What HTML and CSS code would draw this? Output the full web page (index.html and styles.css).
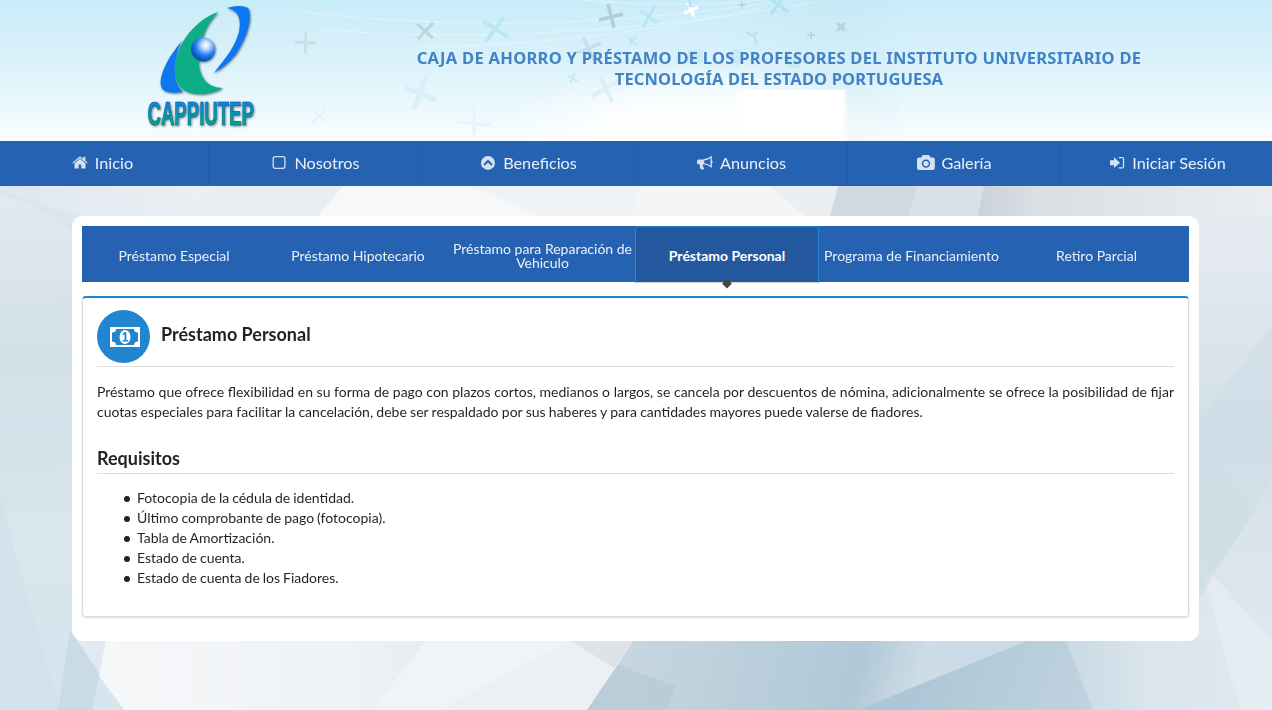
FILE: index.html
```html
<!DOCTYPE html>
<html lang="es">
<head>
<meta charset="utf-8">
<title>CAPPIUTEP - Préstamo Personal</title>
<link rel="stylesheet" href="styles.css">
</head>
<body>
<svg class="backdrop" viewBox="0 0 1272 710" preserveAspectRatio="none" aria-hidden="true">
  <defs>
    <linearGradient id="topL" x1="0" x2="1"><stop offset="0" stop-color="#dfe7ef"/><stop offset="1" stop-color="#ebf0f3"/></linearGradient>
    <linearGradient id="topR" x1="0" x2="1"><stop offset="0" stop-color="#cad1d8"/><stop offset=".2" stop-color="#d9dfe3"/><stop offset="1" stop-color="#eaeef2"/></linearGradient>
    <linearGradient id="left" x1="0" y1="0" x2="0" y2="1"><stop offset=".26" stop-color="#e3e9f1"/><stop offset=".5" stop-color="#d3e1e9"/><stop offset=".75" stop-color="#d9e6ee"/><stop offset="1" stop-color="#d5e4ed"/></linearGradient>
    <linearGradient id="right" x1="0" y1="0" x2="0" y2="1"><stop offset=".26" stop-color="#e8ecf1"/><stop offset=".45" stop-color="#dde6ed"/><stop offset=".6" stop-color="#d3e0e8"/><stop offset="1" stop-color="#e2eaf0"/></linearGradient>
    <linearGradient id="botL" x1="0" x2="1"><stop offset="0" stop-color="#f6f7f9"/><stop offset=".45" stop-color="#eff3f6"/><stop offset=".6" stop-color="#e8edf1"/><stop offset="1" stop-color="#eef2f4"/></linearGradient>
    <linearGradient id="botM" gradientUnits="userSpaceOnUse" x1="610" y1="640" x2="960" y2="740"><stop offset="0" stop-color="#c8d7e0"/><stop offset=".35" stop-color="#bcd0dc"/><stop offset=".68" stop-color="#b0c8d7"/><stop offset=".84" stop-color="#cddce5"/><stop offset="1" stop-color="#cbdbe5"/></linearGradient>
    <linearGradient id="botD" gradientUnits="userSpaceOnUse" x1="940" y1="640" x2="1090" y2="700"><stop offset="0" stop-color="#aec7d6"/><stop offset="1" stop-color="#c0d3df"/></linearGradient>
    <linearGradient id="botR" x1="0" x2="1"><stop offset="0" stop-color="#c9d9e4"/><stop offset=".4" stop-color="#dbe5ec"/><stop offset="1" stop-color="#dfe8ee"/></linearGradient>
  </defs>
  <rect width="1272" height="710" fill="#edf1f4"/>
  <rect width="200" height="710" fill="url(#left)"/>
  <rect x="1100" width="172" height="710" fill="url(#right)"/>
  <path d="M0 186H215L190 216H72L0 190z" fill="url(#topL)"/>
  <path d="M0 190L80 216H72V230Q30 200 0 196z" fill="#d9e2ea" opacity=".6"/>
  <path d="M215 186H343L318 216H190z" fill="#e8eef1"/>
  <path d="M343 186H639L632 216H318z" fill="#f6f8f9"/>
  <path d="M470 186H639L632 216H540z" fill="#eff3f5"/>
  <path d="M639 186H838L830 216H632z" fill="#f3f5f7"/>
  <path d="M770 186H838L830 216H805z" fill="#ebeff2"/>
  <path d="M838 186H984L978 216H830z" fill="#d0d9e1"/>
  <path d="M917 186H984L978 216H908z" fill="#d9e0e7"/>
  <path d="M984 186H1272V216H978z" fill="url(#topR)"/>
  <path d="M0 310L72 296V460L0 520z" fill="#cfdfe8" opacity=".25"/>
  <path d="M0 500L60 710H0z" fill="#cddfe9" opacity=".5"/>
  <path d="M72 640H110L99 676z" fill="#e2e9f1"/>
  <path d="M70 630L124 710H58z" fill="#c8dbe7"/>
  <path d="M99 676L124 710H92z" fill="#d7e5ee"/>
  <path d="M106 640H636L587 710H124L99 676z" fill="url(#botL)"/>
  <path d="M427 640H636L587 710H372z" fill="#ecf0f3"/>
  <path d="M427 640L372 710H440L570 640z" fill="#f3f5f6" opacity=".7"/>
  <path d="M634 640H1031L857 710H587z" fill="url(#botM)"/>
  <path d="M570 640H634L614 668z" fill="#dce4ea"/>
  <path d="M618 665L675 686 667 710H587z" fill="#b4cad6" opacity=".7"/>
  <path d="M1029 640H1070L1094 710H857z" fill="url(#botD)"/>
  <path d="M1066 640H1272V710H1093z" fill="url(#botR)"/>
  <path d="M1199 560L1272 640V710H1240z" fill="#ecf1f5" opacity=".5"/>
  <path d="M1272 325L1199 421V600L1272 480z" fill="#cddce6" opacity=".5"/>
  <path d="M1199 440L1257 510 1199 590z" fill="#cfdde6" opacity=".7"/>
</svg>
<div class="page">
  <header class="banner">
    <svg class="banner-art" viewBox="0 0 1272 141" preserveAspectRatio="none" aria-hidden="true">
      <defs>
        <radialGradient id="glow"><stop offset="0" stop-color="#fff"/><stop offset=".5" stop-color="#fff" stop-opacity=".8"/><stop offset="1" stop-color="#fff" stop-opacity="0"/></radialGradient>
        <linearGradient id="beam" x1="0" x2="1"><stop offset="0" stop-color="#fff" stop-opacity=".4"/><stop offset=".1" stop-color="#fff"/><stop offset=".95" stop-color="#fff"/><stop offset="1" stop-color="#fff" stop-opacity="0"/></linearGradient>
        <linearGradient id="shade" x1="0" x2="1"><stop offset="0" stop-color="#b9dfe9" stop-opacity="0"/><stop offset=".75" stop-color="#b9dfe9" stop-opacity=".2"/><stop offset="1" stop-color="#b9dfe9" stop-opacity=".04"/></linearGradient>
      </defs>
      <g fill="none" stroke="#fff" opacity=".35"><path d="M300 12Q560 42 835 -8M320 30Q560 48 830 0M420 47Q600 44 760 8M560 -2Q700 12 790 -4"/></g>
      <rect x="700" width="200" height="141" fill="url(#shade)"/>
      <ellipse cx="700" cy="136" rx="200" ry="72" fill="url(#glow)"/>
      <rect x="736" y="90" width="112" height="51" fill="url(#beam)"/>
      <g fill="none" stroke-width="3">
        <path d="M295 42l21 1M306 32l-1 21" stroke="#c5e1e6"/>
        <path d="M417 24l16 14M433 23l-15 16" stroke="#b8d8de"/>
        <path d="M483 21l25 16M504 17l-18 24" stroke="#b9e7f5" stroke-width="4"/>
        <path d="M599 20l24-6M608 4l6 24" stroke="#b1d0d6" stroke-width="3.500"/>
        <path d="M577 53l24-10M583 37l12 25" stroke="#c4e0e8" stroke-width="3.500"/>
        <path d="M640 10l17 13M655 6l-12 21" stroke="#b7e7f5"/>
        <path d="M676 9l12 5M684 13l4 2M687 3l-5 3" stroke="none"/>
        <path d="M684 13l14-6M688 3l6 14" stroke="#fff"/>
        <path d="M738 5h8M742 1v8M807 35h8M811 31v8" stroke="#b7d2d9" stroke-width="1.500"/>
        <path d="M690 -1v8" stroke="#b4e4f3"/>
        <path d="M770 -2l18 14M784 -4l-13 18" stroke="#afe2f2"/>
        <path d="M404 87l32 13M426 77l-12 32" stroke="#daf0f7" stroke-width="5"/>
        <path d="M592 96l25-14M600 76l12 26" stroke="#dceff5" stroke-width="4"/>
        <path d="M313 109l13 12M326 109l-13 13M455 122l36 3M474 107v28" stroke="#e4f5fa"/>
        <path d="M568 76l10 5M575 73l-5 10" stroke="#c9eaf3" stroke-width="2"/>
        <path d="M628 38l9 7M636 37l-7 9" stroke="#b9e7f4" stroke-width="2"/>
        <path d="M746 32l8 4 3 9M758 31l-5 5" stroke="#b4e2f0" stroke-width="2"/>
      </g>
      <path d="M836 22l5 2 5-2-2 5 2 5-5-2-5 2 2-5z" fill="#b7d6de"/>
      <path d="M688 50h15v13h-15zM735 48l10 6-8 13-9-9zM783 56h17v12h-12z" fill="#bce3ee" opacity=".5"/>
    </svg>
    <svg class="logo" viewBox="0 0 120 140" role="img" aria-label="CAPPIUTEP">
      <defs>
        <radialGradient id="ball" cx=".62" cy=".32" r=".62"><stop offset="0" stop-color="#fff"/><stop offset=".25" stop-color="#c8e0ff"/><stop offset=".65" stop-color="#3083f5"/><stop offset="1" stop-color="#0752b8"/></radialGradient>
        <linearGradient id="word" gradientUnits="userSpaceOnUse" x1="0" y1="-25" x2="0" y2="0"><stop offset="0" stop-color="#0b7ef2"/><stop offset="1" stop-color="#00a886"/></linearGradient>
        <filter id="soft" x="-10%" y="-10%" width="125%" height="125%"><feDropShadow dx=".8" dy="1" stdDeviation=".8" flood-color="#123" flood-opacity=".65"/></filter>
      </defs>
      <g filter="url(#soft)">
        <path d="M36 41C22 57 13 75 15 86Q17 95 37 92Q27 83 29 64Q30 52 36 41z" fill="#0877f2"/>
        <path d="M72 12C45 22 27 50 29 73Q31 96 58 94Q68 93 77 88Q62 88 56 76Q52 68 53 60C44 54 47 39 57 37Q60 25 72 12z" fill="#08ad86"/>
        <circle cx="57" cy="49.500" r="12" fill="url(#ball)"/>
        <path d="M81 8Q94 4 102 8C108 20 98 42 90 54Q80 66 68 73C80 57 88 49 93 32Q97 11 81 8z" fill="#0877f2"/>
        <text class="logo-word" transform="translate(1.500 125) scale(.54 1)" textLength="197" lengthAdjust="spacingAndGlyphs" fill="url(#word)">CAPPIUTEP</text>
      </g>
    </svg>
    <h1 class="banner-title"><span class="title-wide">CAJA DE AHORRO Y PRÉSTAMO DE LOS PROFESORES DEL INSTITUTO UNIVERSITARIO DE</span><br>TECNOLOGÍA DEL ESTADO PORTUGUESA</h1>
  </header>

  <nav class="menu">
    <a class="menu-item"><svg class="icon" viewBox="0 0 16 16"><path d="M8 3.800L2.500 8.400V13.500H6.700V9.600H9.300V13.500H13.500V8.400zM8 1.200L.3 7.700 1.100 8.600 8 2.900 14.900 8.600 15.700 7.700 13.400 5.700V1.800H11.300V4z"/></svg>Inicio</a>
    <a class="menu-item"><svg class="icon" viewBox="0 0 16 16"><rect x="2.200" y="1.700" width="11.700" height="11.600" rx="2" fill="none" stroke="currentColor" stroke-width="1.300"/></svg>Nosotros</a>
    <a class="menu-item"><svg class="icon" viewBox="0 0 16 16"><path fill-rule="evenodd" d="M8 .9a7 7 0 1 1 0 14 7 7 0 0 1 0-14zM8 4.500L3.300 9.200 4.800 10.700 8 7.500 11.200 10.700 12.700 9.200z"/></svg>Beneficios</a>
    <a class="menu-item"><svg class="icon" viewBox="0 0 16 16"><path fill-rule="evenodd" d="M14.800 .8V5.600A1.300 1.300 0 0 1 14.800 8.100V12.900Q10.800 9.500 6.400 9.200Q5.100 10.100 6.200 11.400Q5.700 12.500 7.500 13.500Q6.400 15.200 3.700 14.200Q2.400 11.300 2.700 9.200H1.500Q0 9.200 0 7.700V6Q0 4.500 1.500 4.500H5.800Q10.300 4.300 14.800 .8zM13.500 3.100Q10.300 5.200 7.200 5.600V8.200Q10.300 8.600 13.500 10.600z"/></svg>Anuncios</a>
    <a class="menu-item"><svg class="icon icon-wide" viewBox="0 0 18 16"><path fill-rule="evenodd" d="M2 2.500H4.300L5.200.7Q5.500 0 6.300 0H11.500Q12.300 0 12.600.7L13.500 2.500H15.700Q17.800 2.500 17.800 4.500V13Q17.800 15 15.700 15H2Q0 15 0 13V4.500Q0 2.500 2 2.500zM9 4.400a4.200 4.200 0 1 0 0 8.400 4.200 4.200 0 0 0 0-8.400zM9 5.900a2.700 2.700 0 1 1 0 5.400 2.700 2.700 0 0 1 0-5.400z"/></svg>Galería</a>
    <a class="menu-item"><svg class="icon" viewBox="0 0 16 16"><path d="M1 5.200H5V2.300L11 7.700 5 13.100V10.200H1zM9.800 2H13Q15.200 2 15.200 4.200V11.400Q15.200 13.600 13 13.600H9.800V12.300H13Q13.900 12.300 13.900 11.400V4.200Q13.900 3.300 13 3.300H9.800z"/></svg>Iniciar Sesión</a>
  </nav>

  <main class="card">
    <div class="tabs">
      <a class="tab">Préstamo Especial</a>
      <a class="tab">Préstamo Hipotecario</a>
      <a class="tab">Préstamo para Reparación de Vehiculo</a>
      <a class="tab tab-active">Préstamo Personal</a>
      <a class="tab">Programa de Financiamiento</a>
      <a class="tab">Retiro Parcial</a>
    </div>
    <section class="panel">
      <h2 class="panel-title">
        <span class="badge"><svg viewBox="0 0 30 20"><path fill-rule="evenodd" d="M0 0H30V20H0zM6 2Q6 5.500 2 5.500V14.500Q6 14.500 6 18H24Q24 14.500 28 14.500V5.500Q24 5.500 24 2z"/><ellipse cx="15" cy="10" rx="5.500" ry="7"/><path class="badge-one" d="M12.500 7L15 5H16.300V13H18V14.400H12.700V13H14.500V7.300L13.300 8.200z"/></svg></span>
        <span class="panel-name">Préstamo Personal</span>
      </h2>
      <p class="text">Préstamo que ofrece flexibilidad en su forma de pago con plazos cortos, medianos o largos, se cancela por descuentos de nómina, adicionalmente se ofrece la posibilidad de fijar cuotas especiales para facilitar la cancelación, debe ser respaldado por sus haberes y para cantidades mayores puede valerse de fiadores.</p>
      <h3 class="subtitle">Requisitos</h3>
      <ul class="list">
        <li>Fotocopia de la cédula de identidad.</li>
        <li>Último comprobante de pago (fotocopia).</li>
        <li>Tabla de Amortización.</li>
        <li>Estado de cuenta.</li>
        <li>Estado de cuenta de los Fiadores.</li>
      </ul>
    </section>
  </main>
</div>
</body>
</html>
```
FILE: styles.css
```css
* { box-sizing: border-box; }
html, body { height: 100%; }
body {
  margin: 0;
  overflow: hidden;
  font: 14px/20px Lato, sans-serif;
  color: rgba(0, 0, 0, .87);
}
.backdrop { position: fixed; inset: 0; width: 100%; height: 100%; }
.page { position: relative; }

.banner {
  position: relative;
  display: flex;
  height: 141px;
  padding-left: 146px;
  background: linear-gradient(#c9ecf9, #d9f1fa 40%, #e8f7fd 70%, #f9fdff);
}
.banner-art { position: absolute; inset: 0; width: 100%; height: 100%; }
.logo { position: relative; flex: none; width: 120px; height: 140px; }
.logo-word {
  font: bold 34px "Liberation Sans", sans-serif;
  stroke: #10566f;
  stroke-width: .6px;
}
.banner-title {
  position: relative;
  width: 800px;
  margin: 47px 0 0 113px;
  font: bold 16.500px/21px "Noto Sans", sans-serif;
  letter-spacing: .12px;
  text-align: center;
  white-space: nowrap;
  color: #4183c4;
}
.title-wide { letter-spacing: .28px; }

.menu {
  display: grid;
  grid-template-columns: repeat(6, 213px);
  width: 1278px;
  height: 45px;
  margin-left: -4px;
  background: #2662b2;
}
.menu-item {
  display: flex;
  align-items: center;
  justify-content: center;
  padding: 0 0 2px 1px;
  border-right: 1px solid #235ca6;
  font-size: 16.250px;
  color: rgba(255, 255, 255, .9);
}
.icon {
  width: 16px;
  height: 16px;
  margin-right: 7px;
  fill: currentColor;
  opacity: .9;
}
.icon-wide { width: 18px; margin-right: 6px; }

.card {
  width: 1127px;
  height: 425px;
  margin: 30px 0 0 72px;
  padding: 10px;
  border-radius: 11px;
  background: #fff;
}
.tabs {
  display: grid;
  grid-template-columns: 184px 184px 185px 184px 185px 185px;
  height: 56px;
  background: #2662b2;
}
.tab {
  display: flex;
  align-items: center;
  justify-content: center;
  padding-top: 2px;
  line-height: 14px;
  text-align: center;
  color: rgba(255, 255, 255, .9);
}
.tab-active {
  position: relative;
  height: 57px;
  border: 1px solid #2185d0;
  border-bottom-color: #d4d4d5;
  border-radius: 4px 4px 0 0;
  background: #24589e;
  font-weight: bold;
  color: #fff;
}
.tab-active::after {
  content: "";
  position: absolute;
  left: 50%;
  bottom: -5px;
  width: 7px;
  height: 7px;
  transform: translateX(-50%) rotate(45deg);
  background: #444;
}
.panel {
  height: 321px;
  margin-top: 14px;
  padding: 12px 14px;
  border: 1px solid #d9dadb;
  border-top: 2px solid #2185d0;
  border-radius: 4px;
  box-shadow: 0 1px 2px rgba(34, 36, 38, .15);
}
.panel-title {
  display: flex;
  align-items: center;
  gap: 11px;
  height: 57px;
  margin: 0;
  padding-bottom: 4px;
  border-bottom: 1px solid #dededf;
  font-size: 18px;
  line-height: 23px;
}
.panel-name { padding-bottom: 4px; }
.badge {
  display: grid;
  place-items: center;
  width: 53px;
  height: 53px;
  padding: 2px 0 0 2px;
  border-radius: 50%;
  background: #2185d0;
}
.badge svg { width: 30px; height: 20px; fill: #fff; }
.badge .badge-one { fill: #2185d0; }
.text { margin: 15px 0 0; text-align: justify; word-spacing: -.32px; }
.subtitle {
  margin: 25px 0 0;
  padding-bottom: 3px;
  border-bottom: 1px solid #dededf;
  font-size: 18px;
  line-height: 23px;
}
.list {
  margin: 14px 0 0;
  padding-left: 40px;
  list-style: none;
  word-spacing: -.6px;
}
.list li::before {
  content: "";
  display: inline-block;
  width: 6px;
  height: 6px;
  margin: 0 7px 1px -13px;
  border-radius: 50%;
  background: #222;
}
```
